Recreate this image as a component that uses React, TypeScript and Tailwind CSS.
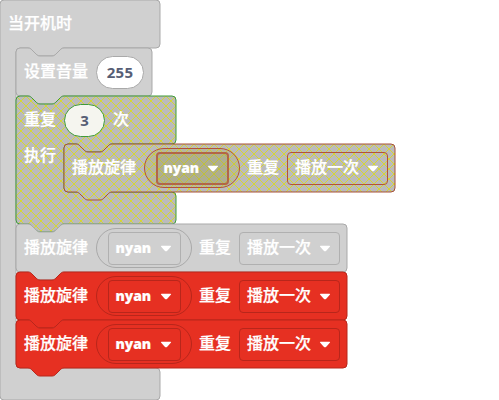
import React from "react";

type Tone = { fill: string; stroke: string };

const GREY: Tone = { fill: "#d0d0d0", stroke: "#a9a9a9" };
const RED: Tone = { fill: "#e63022", stroke: "#b8261b" };

const NOTCH = "h8 c2 0 3 1 4 2 l4 4 c1 1 2 2 4 2 h12 c2 0 3 -1 4 -2 l4 -4 c1 -1 2 -2 4 -2";
const BUMP = "c-2 0 -3 1 -4 2 l-4 4 c-1 1 -2 2 -4 2 h-12 c-2 0 -3 -1 -4 -2 l-4 -4 c-1 -1 -2 -2 -4 -2";

function Shape({ d, fill, stroke }: { d: string; fill: string; stroke: string }) {
  return (
    <svg className="pointer-events-none absolute left-0 top-0 size-px overflow-visible">
      <path d={d} fill={fill} stroke={stroke} />
    </svg>
  );
}

function statement(width: number) {
  return `M0 4 a4 4 0 0 1 4 -4 ${NOTCH} H${width - 4} a4 4 0 0 1 4 4 V44 a4 4 0 0 1 -4 4 H48 ${BUMP} H4 a4 4 0 0 1 -4 -4 Z`;
}

function Label({ children }: { children: React.ReactNode }) {
  return <span className="relative whitespace-nowrap pb-1">{children}</span>;
}

function Caret() {
  return (
    <svg className="h-[7px] w-3 shrink-0" viewBox="0 0 12 7">
      <path d="M1.6 .8 H10.4 Q11.6 .8 10.8 1.8 L7 5.9 Q6 6.8 5 5.9 L1.2 1.8 Q.4 .8 1.6 .8Z" fill="#fff" />
    </svg>
  );
}

type MelodyProps = { fill: string; stroke: string; ring: string; tune: string; mode: string };

function PlayMelody({ fill, stroke, ring, tune, mode }: MelodyProps) {
  return (
    <div className="relative flex h-12 w-[331px] items-center pl-2">
      <Shape d={statement(331)} fill={fill} stroke={stroke} />
      <Label>播放旋律</Label>
      <div className={`relative ml-2 flex h-10 w-24 items-center justify-center rounded-full border ${ring}`}>
        <div className={`flex h-[33px] w-[73px] items-center justify-between rounded pr-2 ${tune}`}>
          <span className="font-['Open_Sans',sans-serif] text-[14px] font-extrabold leading-4 tracking-[-0.1px] [-webkit-text-stroke:0.15px_#fff]">nyan</span>
          <Caret />
        </div>
      </div>
      <span className="relative ml-[7px] whitespace-nowrap pb-1">重复</span>
      <div className={`relative ml-2 flex h-[33px] w-[101px] items-center justify-between rounded border pl-[7px] pr-2 ${mode}`}>
        <span className="whitespace-nowrap pb-1">播放一次</span>
        <Caret />
      </div>
    </div>
  );
}

function NumberField({ value, className }: { value: string; className: string }) {
  return (
    <span className={`relative mx-2 flex h-[33px] items-center justify-center rounded-full border font-['Open_Sans',sans-serif] text-[15px] font-bold tracking-[0.2px] text-[#575e75] [-webkit-text-stroke:0] ${className}`}>
      {value}
    </span>
  );
}

function SetVolume() {
  return (
    <div className="relative flex h-12 w-[136px] items-center pl-2">
      <Shape d={statement(136)} fill={GREY.fill} stroke={GREY.stroke} />
      <Label>设置音量</Label>
      <NumberField value="255" className="w-[49px] border-[#a9a9a9] bg-white" />
    </div>
  );
}

const LOOP = `M0 4 a4 4 0 0 1 4 -4 ${NOTCH} H156 a4 4 0 0 1 4 4 V44 a4 4 0 0 1 -4 4 H96 ${BUMP} H52 a4 4 0 0 0 -4 4 V92 a4 4 0 0 0 4 4 H156 a4 4 0 0 1 4 4 V124 a4 4 0 0 1 -4 4 H48 ${BUMP} H4 a4 4 0 0 1 -4 -4 Z`;

function RepeatLoop() {
  return (
    <div className="relative h-32">
      <Shape d={LOOP} fill="url(#hatch)" stroke="#3f9a3c" />
      <div className="flex h-12 items-center pl-2">
        <Label>重复</Label>
        <NumberField value="3" className="w-[41px] border-[#3f9a3c] bg-[#f5f5ef]" />
        <Label>次</Label>
      </div>
      <div className="flex h-12">
        <div className="relative w-12 pl-2 leading-5">执行</div>
        <PlayMelody
          fill="url(#hatch)"
          stroke="#a65039"
          ring="border-[#b35239] bg-[#a8a83c]/20"
          tune="border-2 border-[#b35239]/80 bg-[#8c8c50]/20 pl-1.5"
          mode="border-[#b35239]"
        />
      </div>
    </div>
  );
}

const START = `M0 4 a4 4 0 0 1 4 -4 H156 a4 4 0 0 1 4 4 V44 a4 4 0 0 1 -4 4 H64 ${BUMP} H20 a4 4 0 0 0 -4 4 V364 a4 4 0 0 0 4 4 H156 a4 4 0 0 1 4 4 V396 a4 4 0 0 1 -4 4 H4 a4 4 0 0 1 -4 -4 Z`;

const greyField = "border border-[#b0b0b0] pl-[7px]";
const redField = "border border-[#b8261b] pl-[7px]";

export default function App() {
  return (
    <main className="h-[400px] w-[499px] overflow-hidden bg-white font-['Noto_Sans_CJK_SC',sans-serif] text-base font-medium leading-4 text-white [-webkit-text-stroke:0.25px_#fff]">
      <svg className="absolute size-0">
        <defs>
          <pattern id="hatch" width="10" height="10" patternUnits="userSpaceOnUse">
            <rect width="10" height="10" fill="#bbb" />
            <path d="M0 0 L10 10 M10 0 L0 10" stroke="#d6d633" strokeLinecap="square" />
          </pattern>
        </defs>
      </svg>
      <section className="relative">
        <Shape d={START} fill={GREY.fill} stroke={GREY.stroke} />
        <div className="flex h-12 items-center pl-2">
          <Label>当开机时</Label>
        </div>
        <div className="pl-4">
          <SetVolume />
          <RepeatLoop />
          <PlayMelody fill={GREY.fill} stroke={GREY.stroke} ring="border-[#a9a9a9]" tune={greyField} mode="border-[#b0b0b0]" />
          <PlayMelody fill={RED.fill} stroke={RED.stroke} ring="border-[#b8261b]" tune={redField} mode="border-[#b8261b]" />
          <PlayMelody fill={RED.fill} stroke={RED.stroke} ring="border-[#b8261b]" tune={redField} mode="border-[#b8261b]" />
        </div>
      </section>
    </main>
  );
}
